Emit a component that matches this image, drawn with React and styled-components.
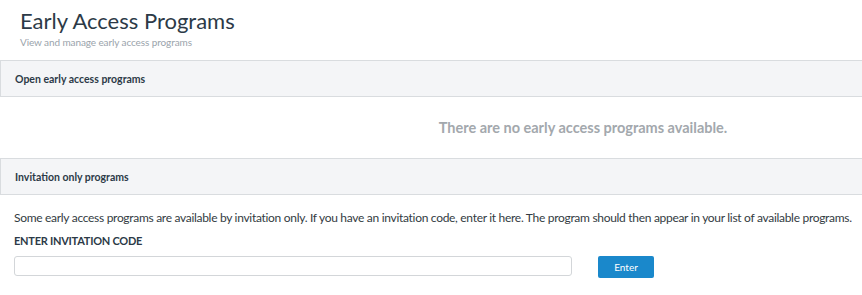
import React from "react";
import styled, { createGlobalStyle } from "styled-components";

const GlobalStyle = createGlobalStyle`
  body {
    margin: 0;
    background: #fff;
    font-family: Lato, "Liberation Sans", sans-serif;
    overflow: hidden;
  }
`;

const App = () => {
  return (
    <>
      <GlobalStyle />
      <Page>
        <Header>
          <Title>Early Access Programs</Title>
          <Subtitle>View and manage early access programs</Subtitle>
        </Header>

        <SectionBar>
          <SectionTitle>Open early access programs</SectionTitle>
        </SectionBar>
        <EmptyState>There are no early access programs available.</EmptyState>

        <SectionBar>
          <SectionTitle>Invitation only programs</SectionTitle>
        </SectionBar>
        <InviteBody>
          <Description>
            Some early access programs are available by invitation only. If you
            have an invitation code, enter it here. The program should then
            appear in your list of available programs.
          </Description>
          <FieldLabel>ENTER INVITATION CODE</FieldLabel>
          <InviteRow>
            <CodeInput type="text" />
            <EnterButton>Enter</EnterButton>
          </InviteRow>
        </InviteBody>
      </Page>
    </>
  );
};

const Page = styled.div`
  width: 862px;
`;

const Header = styled.div`
  padding: 7px 20px 12px 20px;
`;

const Title = styled.h1`
  margin: 0;
  font-size: 22px;
  font-weight: 400;
  line-height: 28px;
  color: #2c3a47;
`;

const Subtitle = styled.div`
  margin-top: 1px;
  font-size: 10px;
  letter-spacing: -0.1px;
  color: #9aa3ab;
`;

const SectionBar = styled.div`
  height: 35px;
  display: flex;
  align-items: center;
  padding-left: 14px;
  background: #f4f5f7;
  border: 1px solid #d9dcdf;
  border-right: none;
`;

const SectionTitle = styled.div`
  font-size: 10.5px;
  font-weight: 700;
  color: #2c3a47;
`;

const EmptyState = styled.div`
  height: 61px;
  display: flex;
  align-items: center;
  justify-content: center;
  padding-left: 304px;
  font-size: 14.5px;
  font-weight: 700;
  color: #a3a8ad;
`;

const InviteBody = styled.div`
  padding: 15px 14px 0 14px;
`;

const Description = styled.div`
  font-size: 12px;
  letter-spacing: -0.3px;
  color: #333b42;
  line-height: 16px;
  white-space: nowrap;
`;

const FieldLabel = styled.div`
  margin-top: 8px;
  font-size: 11px;
  font-weight: 700;
  letter-spacing: -0.25px;
  color: #2c3a47;
`;

const InviteRow = styled.div`
  display: flex;
  align-items: flex-start;
  gap: 26px;
  margin-top: 9px;
`;

const CodeInput = styled.input`
  box-sizing: border-box;
  width: 558px;
  height: 20px;
  margin: 0;
  border: 1px solid #d3d6d9;
  border-radius: 3px;
  background: #fff;
`;

const EnterButton = styled.button`
  width: 56px;
  height: 22px;
  border: none;
  border-radius: 2px;
  background: #1a88cb;
  color: #fff;
  font-family: inherit;
  font-size: 10px;
  padding: 0;
`;

export default App;
